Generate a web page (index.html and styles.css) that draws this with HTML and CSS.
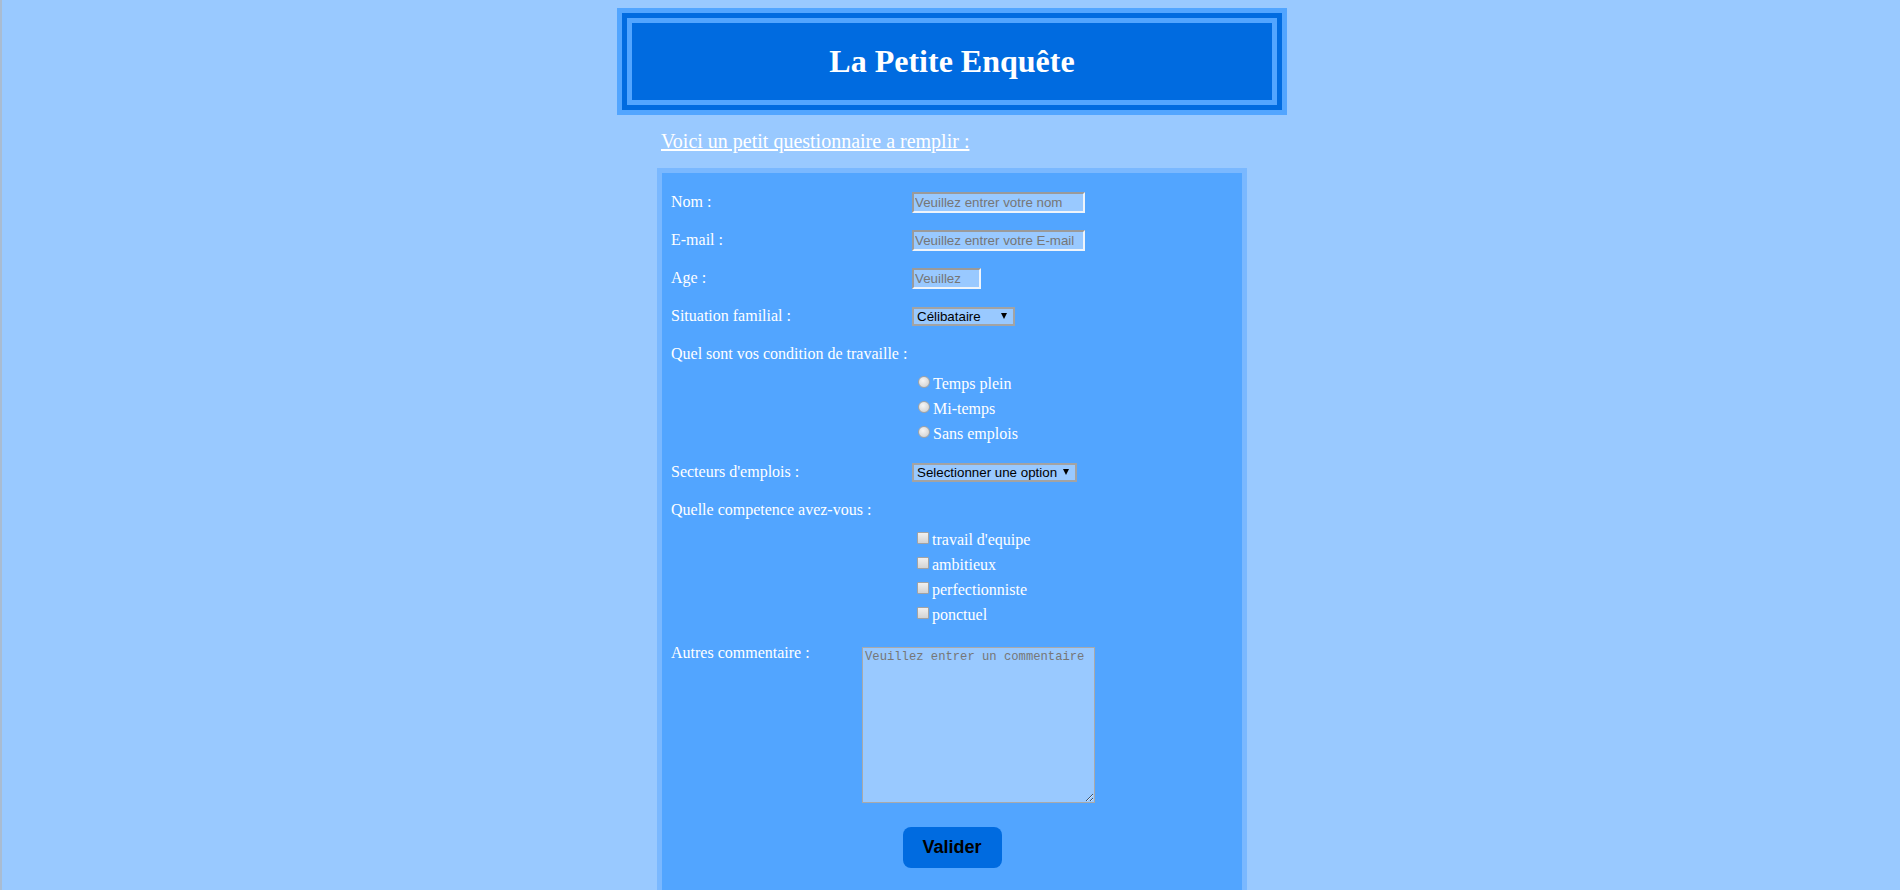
FILE: index.html
```html
<!DOCTYPE html>
<html lang="fr">
<head>
<meta charset="utf-8">
<title>La Petite Enquête</title>
<link rel="stylesheet" href="styles.css">
</head>
<body>
<div class="page">
  <header class="header">
    <div class="header-inner">
      <h1 class="title">La Petite Enquête</h1>
    </div>
  </header>
  <div class="main">
    <p class="intro">Voici un petit questionnaire a remplir :</p>
    <form class="form">
      <div class="row">
        <label class="label" for="nom">Nom :</label>
        <input class="field" id="nom" type="text" placeholder="Veuillez entrer votre nom">
      </div>
      <div class="row">
        <label class="label" for="mail">E-mail :</label>
        <input class="field" id="mail" type="text" placeholder="Veuillez entrer votre E-mail">
      </div>
      <div class="row">
        <label class="label" for="age">Age :</label>
        <input class="field field-sm" id="age" type="text" placeholder="Veuillez entrer votre age">
      </div>
      <div class="row">
        <label class="label" for="situation">Situation familial :</label>
        <span class="select-wrap">
          <select class="select" id="situation">
            <option>Célibataire</option>
            <option>Marié(e)</option>
            <option>Divorcé(e)</option>
          </select>
          <span class="arrow"></span>
        </span>
      </div>
      <div class="row row-heading">
        <span class="label label-wide">Quel sont vos condition de travaille :</span>
      </div>
      <div class="options">
        <label class="option"><input class="radio" type="radio" name="cond">Temps plein</label>
        <label class="option"><input class="radio" type="radio" name="cond">Mi-temps</label>
        <label class="option"><input class="radio" type="radio" name="cond">Sans emplois</label>
      </div>
      <div class="row row-sect">
        <label class="label" for="secteur">Secteurs d'emplois :</label>
        <span class="select-wrap">
          <select class="select select-wide" id="secteur">
            <option>Selectionner une option</option>
            <option>Informatique</option>
            <option>Commerce</option>
          </select>
          <span class="arrow"></span>
        </span>
      </div>
      <div class="row row-heading2">
        <span class="label label-wide">Quelle competence avez-vous :</span>
      </div>
      <div class="options">
        <label class="option"><input class="check" type="checkbox">travail d'equipe</label>
        <label class="option"><input class="check" type="checkbox">ambitieux</label>
        <label class="option"><input class="check" type="checkbox">perfectionniste</label>
        <label class="option"><input class="check" type="checkbox">ponctuel</label>
      </div>
      <div class="row-comment">
        <label class="label label-comment" for="com">Autres commentaire :</label>
        <textarea class="comment" id="com" placeholder="Veuillez entrer un commentaire"></textarea>
      </div>
      <button class="submit" type="button">Valider</button>
    </form>
  </div>
</div>
</body>
</html>
```
FILE: styles.css
```css
html {
  background: #99c9ff;
}
body {
  margin: 0;
  background: #99c9ff;
  border-left: 2px solid #a9bcd2;
  padding-left: 2px;
  font-family: "Liberation Serif", "Times New Roman", serif;
  color: #ffffff;
}
.page {
  display: flex;
  flex-direction: column;
  align-items: center;
  padding-top: 8px;
}
.header {
  width: 670px;
  box-sizing: border-box;
  background: #52a5ff;
  padding: 5px;
}
.header-inner {
  background: #006be0;
  padding: 5px;
}
.title {
  margin: 0;
  background: #006be0;
  border: 5px solid #52a5ff;
  padding: 20px 0;
  font-size: 32px;
  line-height: 37px;
  font-weight: bold;
  text-align: center;
  color: #ffffff;
}
.main {
  width: 590px;
}
.intro {
  margin: 15px 0;
  padding-left: 4px;
  font-size: 20px;
  line-height: 23px;
  text-decoration: underline;
  color: #ffffff;
}
.form {
  box-sizing: border-box;
  width: 590px;
  background: #52a5ff;
  border: 5px solid #7ab8ff;
  padding: 10px 9px 22px;
  font-size: 16px;
}
.row {
  display: flex;
  align-items: center;
  height: 38px;
}
.row-heading {
  height: 36px;
}
.row-heading .label,
.row-heading2 .label {
  margin-top: 2px;
}
.row-sect {
  margin-top: 7px;
}
.row-heading2 {
  height: 36px;
}
.label {
  width: 241px;
  flex: none;
  font-size: 16px;
  line-height: 18px;
  color: #ffffff;
}
.label-wide {
  width: auto;
}
.field {
  box-sizing: border-box;
  width: 173px;
  height: 21px;
  margin: 0;
  padding: 1px 1px;
  border: 2px solid;
  border-color: #9a9a9a #eef4fb #eef4fb #9a9a9a;
  background: #99c9ff;
  font-family: "Liberation Sans", Arial, sans-serif;
  font-size: 13.33px;
  color: #000000;
  outline: none;
}
.field::placeholder {
  color: #767676;
}
.field-sm {
  width: 69px;
  padding-right: 15px;
}
.select-wrap {
  position: relative;
  display: inline-block;
  line-height: 0;
}
.select {
  -webkit-appearance: none;
  appearance: none;
  box-sizing: border-box;
  width: 103px;
  height: 19px;
  margin: 0;
  padding: 0 14px 0 3px;
  border: 2px solid #a3a3a3;
  border-radius: 0;
  background: #99c9ff;
  font-family: "Liberation Sans", Arial, sans-serif;
  font-size: 13.33px;
  line-height: 15px;
  color: #000000;
}
.select-wide {
  width: 165px;
}
.arrow {
  position: absolute;
  right: 8px;
  top: 6px;
  width: 0;
  height: 0;
  border-left: 3px solid transparent;
  border-right: 3px solid transparent;
  border-top: 6px solid #000000;
}
.options {
  padding-left: 241px;
}
.option {
  display: flex;
  align-items: center;
  height: 25px;
  font-size: 16px;
  color: #ffffff;
}
.radio {
  -webkit-appearance: none;
  appearance: none;
  box-sizing: border-box;
  width: 12px;
  height: 12px;
  margin: 0 3px 3px 6px;
  border: 1px solid #a3a3a3;
  border-radius: 50%;
  background: radial-gradient(circle at 40% 35%, #f6f6f6 0%, #dcdcdc 60%, #cbcbcb 100%);
}
.check {
  -webkit-appearance: none;
  appearance: none;
  box-sizing: border-box;
  width: 12px;
  height: 12px;
  margin: 0 3px 3px 5px;
  border: 1px solid #a3a3a3;
  border-radius: 1px;
  background: linear-gradient(#f0f0f0, #d3d3d3);
}
.row-comment {
  display: flex;
  align-items: flex-start;
  margin-top: 17px;
}
.label-comment {
  width: 191px;
}
.comment {
  box-sizing: border-box;
  width: 233px;
  height: 156px;
  margin: 3px 0 0;
  padding: 2px;
  border: 1px solid #a9a9a9;
  background: #99c9ff;
  font-family: "Liberation Mono", "DejaVu Sans Mono", monospace;
  font-size: 12.2px;
  line-height: 15px;
  color: #000000;
  outline: none;
}
.comment::placeholder {
  color: #767676;
}
.submit {
  display: block;
  width: 99px;
  height: 41px;
  margin: 24px auto 0;
  padding: 0;
  border: none;
  border-radius: 8px;
  background: #006be0;
  font-family: "Liberation Sans", Arial, sans-serif;
  font-size: 18px;
  font-weight: bold;
  color: #000000;
}
```
